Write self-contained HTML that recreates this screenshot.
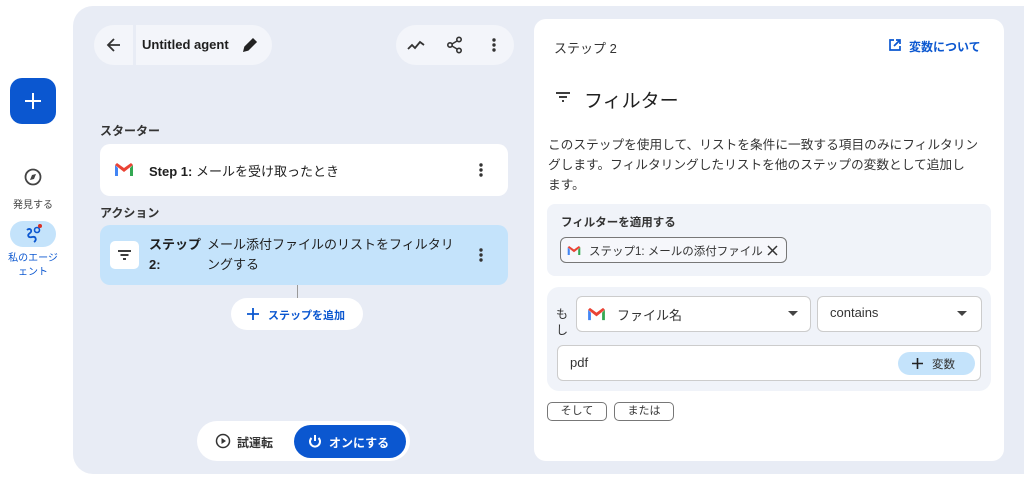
<!DOCTYPE html>
<html><head><meta charset="utf-8"><style>
*{box-sizing:border-box;margin:0;padding:0}
body{width:1024px;height:480px;background:#fff;font-family:"Liberation Sans","Noto Sans CJK JP",sans-serif;color:#1f1f1f;position:relative;overflow:hidden}
.a{position:absolute}
.panel{left:73px;top:6px;width:951px;height:468px;background:#e8ecf5;border-radius:20px 0 0 20px}
.pill{background:#f3f5fa;border-radius:20px}
.card{background:#fff;border-radius:10px}
.t13{font-size:13px}
svg{display:block}
</style></head><body>
<div class="a" style="left:10px;top:78px;width:46px;height:46px;background:#0b57d0;border-radius:12px"><svg width="46" height="46"><path d="M23 15v16M15 23h16" stroke="#fff" stroke-width="2"/></svg></div>
<div class="a" style="left:23px;top:167px"><svg width="20" height="20"><circle cx="10" cy="10" r="7.5" fill="none" stroke="#444" stroke-width="1.8"/><path d="M13 7l-2 5-4 1 2-5z" fill="#444"/></svg></div>
<div class="a" style="left:10px;top:196px;width:46px;text-align:center;font-size:10px;color:#444">発見する</div>
<div class="a" style="left:10px;top:221px;width:46px;height:26px;background:#c4e3fb;border-radius:13px"><svg width="46" height="26"><path d="M17 9c3-3 6 1 3 3s-2 5 2 4 5 3 2 5" fill="none" stroke="#0b57d0" stroke-width="1.8"/><circle cx="27" cy="9" r="2.5" fill="none" stroke="#0b57d0" stroke-width="1.6"/><circle cx="30" cy="5" r="2" fill="#d93025"/></svg></div>
<div class="a" style="left:5px;top:252px;width:56px;text-align:center;font-size:10px;color:#0b57d0;line-height:14px">私のエージェント</div>

<div class="a panel"></div>
<div class="a pill" style="left:94px;top:25px;width:178px;height:40px"></div>
<div class="a" style="left:133px;top:25px;width:3px;height:40px;background:#e8ecf5"></div>
<div class="a" style="left:104px;top:35px"><svg width="20" height="20"><path d="M16 10H5M10 4l-6 6 6 6" fill="none" stroke="#333" stroke-width="1.8"/></svg></div>
<div class="a" style="left:142px;top:37px;font-size:13px;font-weight:bold">Untitled agent</div>
<div class="a" style="left:240px;top:35px"><svg width="20" height="20"><path d="M4 16l1-4 8-8 3 3-8 8z" fill="#222" stroke="#222" stroke-width="1.5"/></svg></div>
<div class="a pill" style="left:396px;top:25px;width:118px;height:40px"></div>
<div class="a" style="left:406px;top:35px"><svg width="20" height="20"><path d="M2 14l4-4 3 3 5-6 4 3" fill="none" stroke="#333" stroke-width="1.8"/></svg></div>
<div class="a" style="left:445px;top:35px"><svg width="20" height="20"><circle cx="14" cy="4.5" r="2.2" fill="none" stroke="#333" stroke-width="1.6"/><circle cx="5" cy="10" r="2.2" fill="none" stroke="#333" stroke-width="1.6"/><circle cx="14" cy="15.5" r="2.2" fill="none" stroke="#333" stroke-width="1.6"/><path d="M7 9l5-3M7 11l5 3" stroke="#333" stroke-width="1.5"/></svg></div>
<div class="a" style="left:492px;top:38px"><svg width="4" height="14"><circle cx="2" cy="2" r="1.7" fill="#333"/><circle cx="2" cy="7" r="1.7" fill="#333"/><circle cx="2" cy="12" r="1.7" fill="#333"/></svg></div>

<div class="a" style="left:100px;top:122px;font-size:12px;font-weight:bold;color:#333">スターター</div>
<div class="a card" style="left:100px;top:144px;width:408px;height:52px"></div>
<div class="a" style="left:114px;top:162px"><svg width="20" height="15" viewBox="0 0 20 15"><path d="M1 3v11h3V6z" fill="#4285f4"/><path d="M16 6v8h3V3z" fill="#34a853"/><path d="M1 3l9 7 9-7-2-2-7 5-7-5z" fill="#ea4335"/></svg></div>
<div class="a t13" style="left:149px;top:161px"><b>Step 1:</b> メールを受け取ったとき</div>
<div class="a" style="left:479px;top:163px"><svg width="4" height="14"><circle cx="2" cy="2" r="1.7" fill="#333"/><circle cx="2" cy="7" r="1.7" fill="#333"/><circle cx="2" cy="12" r="1.7" fill="#333"/></svg></div>

<div class="a" style="left:100px;top:204px;font-size:12px;font-weight:bold;color:#333">アクション</div>
<div class="a" style="left:100px;top:225px;width:408px;height:60px;background:#c4e3fb;border-radius:10px"></div>
<div class="a" style="left:110px;top:241px;width:29px;height:28px;background:#fff;border-radius:5px"><svg width="29" height="28"><path d="M8 10h13M10.5 14h8M13 18h3" stroke="#222" stroke-width="1.8"/></svg></div>
<div class="a t13" style="left:149px;top:235px;line-height:20px;font-weight:bold">ステップ<br>2:</div>
<div class="a t13" style="left:207px;top:235px;line-height:20px;width:270px">メール添付ファイルのリストをフィルタリ<br>ングする</div>
<div class="a" style="left:479px;top:248px"><svg width="4" height="14"><circle cx="2" cy="2" r="1.7" fill="#333"/><circle cx="2" cy="7" r="1.7" fill="#333"/><circle cx="2" cy="12" r="1.7" fill="#333"/></svg></div>
<div class="a" style="left:297px;top:285px;width:1px;height:14px;background:#999"></div>
<div class="a" style="left:231px;top:298px;width:132px;height:32px;background:#fff;border-radius:16px"></div>
<div class="a" style="left:246px;top:307px"><svg width="14" height="14"><path d="M7 1v12M1 7h12" stroke="#0b57d0" stroke-width="1.8"/></svg></div>
<div class="a" style="left:268px;top:307px;font-size:11px;font-weight:bold;color:#0b57d0">ステップを追加</div>

<div class="a" style="left:197px;top:421px;width:213px;height:40px;background:#fff;border-radius:20px"></div>
<div class="a" style="left:215px;top:433px"><svg width="16" height="16"><circle cx="8" cy="8" r="6.5" fill="none" stroke="#333" stroke-width="1.5"/><path d="M6.5 5v6l4.5-3z" fill="#333"/></svg></div>
<div class="a" style="left:237px;top:434px;font-size:12px;font-weight:bold;color:#333">試運転</div>
<div class="a" style="left:294px;top:425px;width:112px;height:33px;background:#0b57d0;border-radius:17px"></div>
<div class="a" style="left:307px;top:433px"><svg width="16" height="16"><path d="M8 2v6" stroke="#fff" stroke-width="2"/><path d="M4.5 5a5 5 0 1 0 7 0" fill="none" stroke="#fff" stroke-width="2"/></svg></div>
<div class="a" style="left:329px;top:434px;font-size:12px;font-weight:bold;color:#fff">オンにする</div>

<div class="a card" style="left:534px;top:19px;width:470px;height:442px;border-radius:12px"></div>
<div class="a t13" style="left:554px;top:38px;color:#333">ステップ 2</div>
<div class="a" style="left:888px;top:38px"><svg width="14" height="14"><path d="M6 2H2v10h10V8" fill="none" stroke="#0b57d0" stroke-width="1.7"/><path d="M8 2h4v4M12 2L6 8" fill="none" stroke="#0b57d0" stroke-width="1.7"/></svg></div>
<div class="a" style="left:909px;top:38px;font-size:12px;font-weight:bold;color:#0b57d0">変数について</div>
<div class="a" style="left:554px;top:89px"><svg width="20" height="16"><path d="M2 4h14M5 8h8M8 12h2" stroke="#222" stroke-width="1.7"/></svg></div>
<div class="a" style="left:584px;top:86px;font-size:19px">フィルター</div>
<div class="a" style="left:548px;top:135px;width:432px;font-size:12.7px;line-height:20px;color:#333">このステップを使用して、リストを条件に一致する項目のみにフィルタリングします。フィルタリングしたリストを他のステップの変数として追加し<br>ます。</div>

<div class="a" style="left:547px;top:204px;width:444px;height:72px;background:#f0f3f9;border-radius:8px"></div>
<div class="a" style="left:561px;top:214px;font-size:11.5px;font-weight:bold;color:#333">フィルターを適用する</div>
<div class="a" style="left:560px;top:237px;width:227px;height:26px;border:1px solid #777;border-radius:6px;background:#f6f7fb"></div>
<div class="a" style="left:567px;top:245px"><svg width="14" height="11" viewBox="0 0 20 15"><path d="M1 3v11h3V6z" fill="#4285f4"/><path d="M16 6v8h3V3z" fill="#34a853"/><path d="M1 3l9 7 9-7-2-2-7 5-7-5z" fill="#ea4335"/></svg></div>
<div class="a" style="left:589px;top:243px;font-size:11.5px;color:#333">ステップ1: メールの添付ファイル</div>
<div class="a" style="left:767px;top:245px"><svg width="11" height="11"><path d="M1 1l9 9M10 1l-9 9" stroke="#333" stroke-width="1.5"/></svg></div>

<div class="a" style="left:547px;top:287px;width:444px;height:104px;background:#f0f3f9;border-radius:12px"></div>
<div class="a" style="left:556px;top:306px;font-size:12px;line-height:16px;color:#333">も<br>し</div>
<div class="a" style="left:576px;top:296px;width:235px;height:36px;background:#fff;border:1px solid #ccc;border-radius:6px"></div>
<div class="a" style="left:587px;top:307px"><svg width="19" height="14" viewBox="0 0 20 15"><path d="M1 3v11h3V6z" fill="#4285f4"/><path d="M16 6v8h3V3z" fill="#34a853"/><path d="M1 3l9 7 9-7-2-2-7 5-7-5z" fill="#ea4335"/></svg></div>
<div class="a t13" style="left:617px;top:305px;color:#333">ファイル名</div>
<div class="a" style="left:788px;top:311px"><svg width="10" height="5"><path d="M0 0h10L5 5z" fill="#444"/></svg></div>
<div class="a" style="left:817px;top:296px;width:165px;height:36px;background:#fff;border:1px solid #ccc;border-radius:6px"></div>
<div class="a t13" style="left:830px;top:305px;color:#333">contains</div>
<div class="a" style="left:957px;top:311px"><svg width="10" height="5"><path d="M0 0h10L5 5z" fill="#444"/></svg></div>
<div class="a" style="left:557px;top:345px;width:424px;height:36px;background:#fff;border:1px solid #ccc;border-radius:6px"></div>
<div class="a t13" style="left:570px;top:355px;color:#333">pdf</div>
<div class="a" style="left:898px;top:352px;width:77px;height:23px;background:#c4e3fb;border-radius:12px"></div>
<div class="a" style="left:912px;top:358px"><svg width="11" height="11"><path d="M5.5 0v11M0 5.5h11" stroke="#222" stroke-width="1.6"/></svg></div>
<div class="a" style="left:932px;top:356px;font-size:11.5px;color:#333">変数</div>

<div class="a" style="left:547px;top:402px;width:60px;height:19px;border:1px solid #777;border-radius:5px;font-size:11px;text-align:center;line-height:17px;color:#333">そして</div>
<div class="a" style="left:614px;top:402px;width:60px;height:19px;border:1px solid #777;border-radius:5px;font-size:11px;text-align:center;line-height:17px;color:#333">または</div>
</body></html>
